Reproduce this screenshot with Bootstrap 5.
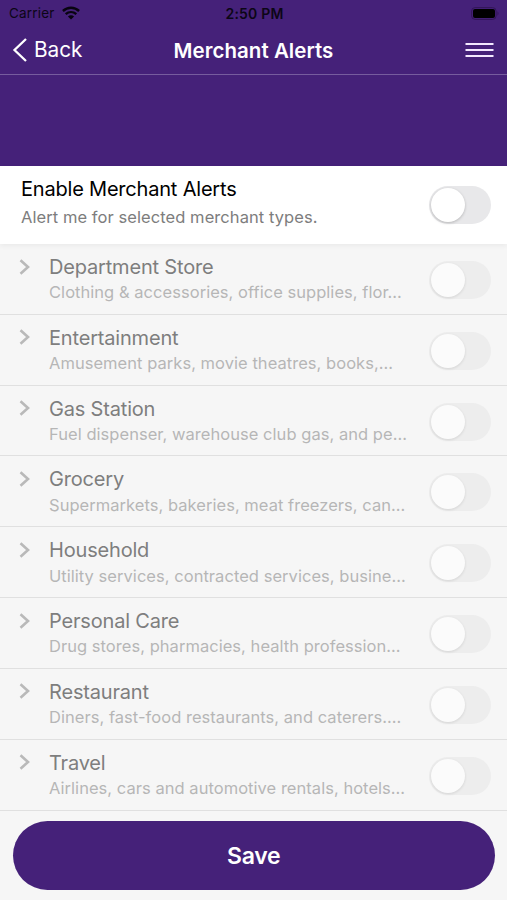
<!DOCTYPE html>
<html lang="en">
<head>
<meta charset="utf-8">
<meta name="viewport" content="width=device-width, initial-scale=1">
<title>Merchant Alerts</title>
<link href="https://cdn.jsdelivr.net/npm/bootstrap@5.3.0/dist/css/bootstrap.min.css" rel="stylesheet">
<style>
  body { font-family: Inter, "Liberation Sans", sans-serif; background: #f6f6f6; height: 900px; overflow: hidden; color: #000; }
  .app-header { background: #452179; height: 166px; }
  .status-bar { height: 27px; font-size: 13.5px; line-height: 27px; padding: 0 7px 0 9px; color: #0c0616; }
  .status-bar > *, .title-bar > * { flex: 1 1 0; }
  .carrier { letter-spacing: .2px; }
  .wifi { margin: -2px 0 0 7px; }
  .clock { font-size: 14px; letter-spacing: .2px; }
  .title-bar { height: 48px; border-bottom: 1px solid #765c9e; padding: 0 13px 2px 12px; color: #fff; }
  .back-label { font-size: 20.8px; line-height: 44px; letter-spacing: -.05px; margin-left: 6px; padding-top: 1px; }
  .page-title { font-size: 20.5px; line-height: 44px; letter-spacing: .04px; font-weight: 600; padding: 2px 0 0 1px; }
  .enable-row { height: 78px; padding: 0 16px 0 21px; box-shadow: 0 2px 5px rgba(0,0,0,.05); }
  .enable-title { font-size: 20px; line-height: 26px; letter-spacing: -.2px; margin-top: 9.500px; }
  .enable-note { font-size: 16.5px; letter-spacing: .07px; line-height: 22px; color: #7d7d7d; margin-top: 4.500px; }
  .alert-row { height: 70.83px; padding: 0 16px 0 19px; border-bottom: 1.5px solid #e0e0e0; }
  .chev { margin: 14.500px 19px 0 0; }
  .row-title { font-size: 20px; letter-spacing: -.18px; line-height: 26px; margin-top: 10px; color: #7e7e7e; }
  .row-note { font-size: 16.5px; letter-spacing: .04px; line-height: 22px; margin-top: 1.300px; color: #b6b6b6; }
  .toggle { width: 62px; height: 38px; border-radius: 19px; background: #e8e8ea; padding: 2px; flex: none; }
  .toggle::before { content: ""; display: block; width: 34px; height: 34px; border-radius: 50%; background: #fff; box-shadow: 0 1px 3px rgba(0,0,0,.22); }
  .alert-row .toggle { background: #ededed; margin-top: 17px; }
  .alert-row .toggle::before { background: #fbfbfb; box-shadow: 0 1px 3px rgba(0,0,0,.11); }
  .save-btn, .save-btn:hover { height: 69px; margin: 10px 12.5px 0 13px; padding-top: 8px; background: #452179; color: #fff; font-size: 23px; font-weight: 600; letter-spacing: -.3px; }
</style>
</head>
<body>
<header class="app-header">
  <div class="status-bar d-flex align-items-center">
    <div class="d-flex align-items-center"><span class="carrier">Carrier</span>
      <svg class="wifi" width="18" height="14" viewBox="0 0 18 14" fill="none" stroke="#080410" stroke-width="2.4"><path d="M.9 5C5.6.7 12.400.7 17.100 5M3.700 8.100c3.100-2.700 7.500-2.700 10.600 0"/><path d="M9 13.500 5.900 10.500c1.800-1.600 4.400-1.600 6.200 0z" fill="#080410" stroke="none"/></svg>
    </div>
    <div class="clock text-center fw-semibold">2:50 PM</div>
    <div class="d-flex justify-content-end">
      <svg width="29" height="13" viewBox="0 0 29 13"><rect x=".6" y=".6" width="24.500" height="11.800" rx="3.500" fill="none" stroke="#321558"/><rect x="2" y="2" width="22" height="9" rx="2" fill="#000"/><path d="M26.500 4.300q2 2.200 0 4.400z" fill="#321558"/></svg>
    </div>
  </div>
  <nav class="title-bar d-flex align-items-center">
    <div class="d-flex align-items-center">
      <svg width="16" height="26" viewBox="0 0 16 26" fill="none" stroke="#fff" stroke-width="2.300"><path d="M14 2 2.500 13 14 24"/></svg>
      <span class="back-label">Back</span>
    </div>
    <div class="page-title text-center text-nowrap">Merchant Alerts</div>
    <div class="d-flex justify-content-end">
      <svg width="29" height="16" viewBox="0 0 29 16" stroke="#f3e8ff" stroke-width="2"><path d="M.5 2h28M.5 8h28M.5 14h28"/></svg>
    </div>
  </nav>
</header>
<main>
  <section class="enable-row bg-white d-flex align-items-center position-relative">
    <div class="flex-grow-1 align-self-start">
      <div class="enable-title"><span>Enable Merchant Alerts</span></div>
      <div class="enable-note"><span>Alert me for selected merchant types.</span></div>
    </div>
    <div class="toggle" role="switch" aria-checked="false"></div>
  </section>
  <div id="alerts"></div>
</main>
<div class="d-flex"><button class="save-btn btn rounded-pill border-0 flex-grow-1">Save</button></div>
<script>
  const rows = [
    ["Department Store", "Clothing & accessories, office supplies, flor…"],
    ["Entertainment", "Amusement parks, movie theatres, books,…"],
    ["Gas Station", "Fuel dispenser, warehouse club gas, and pe…"],
    ["Grocery", "Supermarkets, bakeries, meat freezers, can…"],
    ["Household", "Utility services, contracted services, busine…"],
    ["Personal Care", "Drug stores, pharmacies, health profession…"],
    ["Restaurant", "Diners, fast-food restaurants, and caterers.…"],
    ["Travel", "Airlines, cars and automotive rentals, hotels…"]
  ];
  document.getElementById("alerts").innerHTML = rows.map(([title, note]) => `
    <div class="alert-row d-flex align-items-start">
      <svg class="chev flex-shrink-0" width="11" height="16" viewBox="0 0 11 16" fill="none" stroke="#b9b9b9" stroke-width="2.600"><path d="M1.500 1.300 9 8l-7.500 6.700"/></svg>
      <div class="flex-grow-1 text-nowrap">
        <div class="row-title"><span>${title}</span></div>
        <div class="row-note"><span>${note.replace("&", "&amp;")}</span></div>
      </div>
      <div class="toggle" role="switch" aria-checked="false"></div>
    </div>`).join("");
</script>
<script src="https://cdn.jsdelivr.net/npm/bootstrap@5.3.0/dist/js/bootstrap.bundle.min.js"></script>
</body>
</html>
